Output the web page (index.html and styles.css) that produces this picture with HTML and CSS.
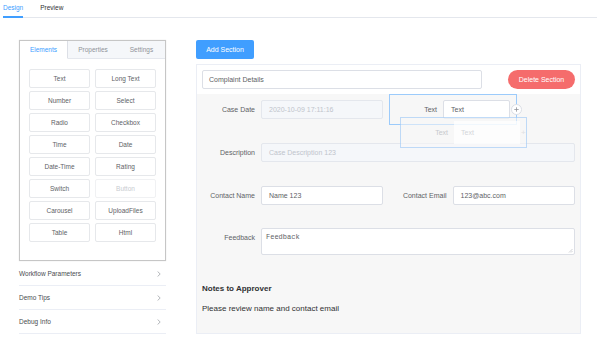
FILE: index.html
```html
<!DOCTYPE html>
<html>
<head>
<meta charset="UTF-8">
<link rel="stylesheet" href="styles.css">
</head>
<body>
	<div class="top-tabs">
		<span class="top-tab active">Design</span>
		<span class="top-tab">Preview</span>
	</div>

	<div class="main">
		<aside class="side">
			<div class="palette">
				<div class="palette-tabs">
					<span class="ptab active">Elements</span>
					<span class="ptab">Properties</span>
					<span class="ptab">Settings</span>
				</div>
				<div class="palette-grid">
					<span class="el">Text</span><span class="el">Long Text</span>
					<span class="el">Number</span><span class="el">Select</span>
					<span class="el">Radio</span><span class="el">Checkbox</span>
					<span class="el">Time</span><span class="el">Date</span>
					<span class="el">Date-Time</span><span class="el">Rating</span>
					<span class="el">Switch</span><span class="el disabled">Button</span>
					<span class="el">Carousel</span><span class="el">UploadFiles</span>
					<span class="el">Table</span><span class="el">Html</span>
				</div>
			</div>
			<ul class="side-list">
				<li>Workflow Parameters<svg width="4" height="6" viewBox="0 0 4 6"><path d="M0.6 0.5 L3.2 3 L0.6 5.5" fill="none" stroke="#a0a3a8" stroke-width="0.8"/></svg></li>
				<li>Demo Tips<svg width="4" height="6" viewBox="0 0 4 6"><path d="M0.6 0.5 L3.2 3 L0.6 5.5" fill="none" stroke="#a0a3a8" stroke-width="0.8"/></svg></li>
				<li>Debug Info<svg width="4" height="6" viewBox="0 0 4 6"><path d="M0.6 0.5 L3.2 3 L0.6 5.5" fill="none" stroke="#a0a3a8" stroke-width="0.8"/></svg></li>
			</ul>
		</aside>

		<section class="canvas">
			<button class="btn-add">Add Section</button>
			<div class="section">
				<div class="section-head">
					<div class="title-input">Complaint Details</div>
					<button class="btn-del">Delete Section</button>
				</div>
				<div class="section-body">
					<div class="row">
						<div class="field">
							<label class="label">Case Date</label>
							<div class="input disabled">2020-10-09 17:11:16</div>
						</div>
						<div class="field dragging">
							<label class="label">Text</label>
							<div class="input">Text</div>
							<span class="plus"><svg width="5" height="5" viewBox="0 0 5 5"><path d="M2.5 0.3 V4.7 M0.3 2.5 H4.7" stroke="#909399" stroke-width="0.8"/></svg></span>
						</div>
					</div>
					<div class="row">
						<div class="field wide">
							<label class="label">Description</label>
							<div class="input disabled">Case Description 123</div>
						</div>
					</div>
					<div class="row">
						<div class="field">
							<label class="label">Contact Name</label>
							<div class="input">Name 123</div>
						</div>
						<div class="field">
							<label class="label">Contact Email</label>
							<div class="input">123@abc.com</div>
						</div>
					</div>
					<div class="row area-row">
						<div class="field wide">
							<label class="label">Feedback</label>
							<div class="input textarea">Feedback<svg class="grip" width="5" height="5" viewBox="0 0 5 5"><path d="M4.5 1 L1 4.5 M4.5 3 L3 4.5" stroke="#b0b3b8" stroke-width="0.6"/></svg></div>
						</div>
					</div>
					<div class="notes">
						<h4>Notes to Approver</h4>
						<p>Please review name and contact email</p>
					</div>

					<div class="ghost">
						<span class="ghost-label">Text</span>
						<span class="ghost-input">Text</span>
						<span class="ghost-plus">+</span>
					</div>
				</div>
			</div>
		</section>
	</div>
</body>
</html>
```

FILE: styles.css
```css
*{margin: 0;padding: 0;list-style: none;box-sizing: border-box;}
body{font-family: "Liberation Sans", Arial, sans-serif;color: #606266;background: #fff;}

.top-tabs{display: flex;gap: 17px;margin: 0 3px;border-bottom: 1px solid #e4e7ed;height: 18px;}
.top-tab{font-size: 6.5px;line-height: 16px;color: #303133;border-bottom: 2px solid transparent;height: 18px;}
.top-tab.active{color: #409eff;border-bottom-color: #409eff;}

.main{display: flex;gap: 30px;padding: 22px 0 0 19px;}

.side{width: 147px;}
.palette{border: 1px solid #c6c6c6;height: 221px;box-shadow: 0 0 1px rgba(0,0,0,0.15);}
.palette-tabs{display: flex;height: 18px;background: #f5f7fa;}
.ptab{font-size: 6.5px;line-height: 18px;text-align: center;color: #909399;border-bottom: 1px solid #e4e7ed;}
.ptab:nth-child(1){width: 48px;}
.ptab:nth-child(2){width: 50px;}
.ptab:nth-child(3){width: 47px;}
.ptab.active{background: #fff;color: #409eff;border-right: 1px solid #dcdfe6;border-bottom-color: #fff;}
.palette-grid{display: grid;grid-template-columns: 61px 61px;grid-auto-rows: 19px;column-gap: 5px;row-gap: 3px;padding: 10px 9px 0;}
.el{border: 1px solid #e6e8eb;border-radius: 2px;font-size: 6.5px;line-height: 17px;text-align: center;color: #606266;}
.el.disabled{color: #c8cbd0;border-color: #f0f1f3;}

.side-list{margin-top: 1px;}
.side-list li{display: flex;justify-content: space-between;align-items: center;height: 24px;border-bottom: 1px solid #ebeef5;font-size: 6.5px;color: #4a4c50;padding-right: 5px;}

.canvas{width: 385px;}
.btn-add{display: block;width: 58px;height: 19px;border: 0;border-radius: 2px;background: #409eff;color: #fff;font-family: inherit;font-size: 7px;margin-bottom: 5px;}

.section{border: 1px solid #ebeef5;height: 270px;background: #f7f7f7;display: flex;flex-direction: column;}
.section-head{display: flex;justify-content: space-between;align-items: center;background: #fff;padding: 5px;height: 29px;}
.title-input{width: 280px;height: 19px;border: 1px solid #dcdfe6;border-radius: 2px;font-size: 7px;line-height: 17px;padding-left: 6px;color: #606266;}
.btn-del{width: 67px;height: 19px;border: 0;border-radius: 10px;background: #f56c6c;color: #fff;font-family: inherit;font-size: 7px;}

.section-body{position: relative;flex: 1;padding: 6px 0 0;display: flex;flex-direction: column;gap: 24px;}
.row{display: flex;}
.area-row{margin-top: -1px;}
.area-row .field{align-items: flex-start;}
.area-row .label{padding-top: 6px;}
.field{display: flex;align-items: center;width: 192px;}
.field.wide{width: 383px;}
.label{width: 64px;padding-right: 6px;text-align: right;font-size: 7px;color: #606266;flex-shrink: 0;}
.input{width: 122px;height: 19px;border: 1px solid #dcdfe6;border-radius: 2px;background: #fff;font-size: 7px;line-height: 17px;padding-left: 7px;color: #606266;}
.input.disabled{background: #f5f7fa;border-color: #e4e7ed;color: #c0c4cc;}
.field.wide .input{width: 314px;}
.textarea{position: relative;height: 27px;font-family: "Liberation Mono", monospace;font-size: 7px;line-height: 9px;padding: 4px 0 0 4px;}
.grip{position: absolute;right: 1px;bottom: 1px;}

.field.dragging{position: relative;width: 128px;margin: -6px 0;padding: 5px 0;border: 1px solid #9ccbfb;}
.field.dragging .label{width: 53px;}
.field.dragging .input{width: 67px;}
.plus{position: absolute;left: 121px;top: 9px;width: 11px;height: 11px;border: 1px solid #dcdfe6;border-radius: 50%;background: #fff;display: flex;align-items: center;justify-content: center;}

.notes{margin-top: 4px;padding-left: 5px;}
.notes h4{font-size: 8px;line-height: 12px;color: #303133;}
.notes p{font-size: 8px;line-height: 12px;margin-top: 8px;color: #303133;}

.ghost{position: absolute;left: 203px;top: 23px;width: 127px;height: 31px;border: 1px solid rgba(120,180,245,0.45);background: rgba(247,247,247,0.55);display: flex;align-items: center;}
.ghost-label{width: 53px;padding-right: 6px;text-align: right;font-size: 7px;color: #c6c8cc;}
.ghost-input{width: 66px;height: 23px;background: rgba(255,255,255,0.7);font-size: 7px;line-height: 23px;padding-left: 7px;color: #d4d6da;}
.ghost-plus{font-size: 8px;color: #dfe1e4;margin-left: 1px;}
```
